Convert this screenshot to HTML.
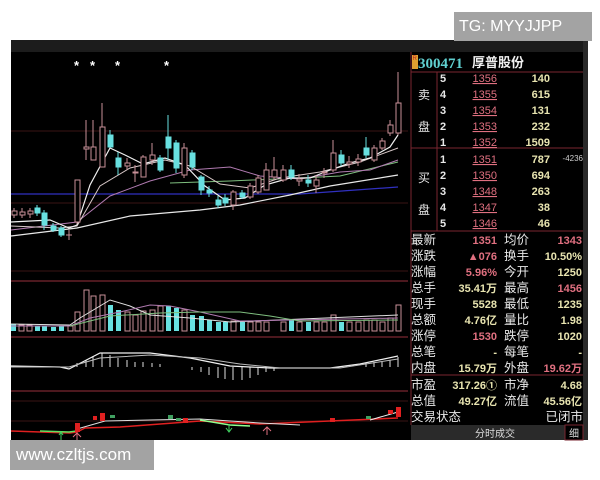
<!DOCTYPE html>
<html><head><meta charset="utf-8"><style>
html,body{margin:0;padding:0;background:#fff;width:600px;height:480px;overflow:hidden;font-family:"Liberation Sans","Noto Sans CJK SC",sans-serif}
svg{position:absolute;left:0;top:0}
.wm{position:absolute;background:#a3a3a3;color:#fff;font-family:"Liberation Sans",sans-serif}
</style></head><body>
<svg width="600" height="480" viewBox="0 0 600 480" font-family="Liberation Sans, Noto Sans CJK SC, sans-serif">
<rect x="11" y="40" width="577" height="400" fill="#000"/>
<rect x="11" y="40" width="577" height="12" fill="#1c1c1c"/>
<rect x="583" y="40" width="5" height="400" fill="#2a2a2a"/>
<g stroke="#3a1414" stroke-width="1">
<line x1="11" y1="131" x2="408" y2="131"/>
<line x1="11" y1="203" x2="408" y2="203"/>
<line x1="11" y1="271" x2="408" y2="271"/>
<line x1="11" y1="401" x2="408" y2="401"/>
<line x1="11" y1="421" x2="408" y2="421"/>
</g>
<g stroke="#7a2630" stroke-width="1.2">
<line x1="11" y1="281" x2="408" y2="281"/>
<line x1="11" y1="337" x2="408" y2="337"/>
<line x1="11" y1="391" x2="408" y2="391"/>
</g>
<g fill="#fff" font-size="13" font-weight="bold"><text x="74" y="70">*</text><text x="90" y="70">*</text><text x="115" y="70">*</text><text x="164" y="70">*</text></g>
<polyline points="11,194 300,194 398,187" fill="none" stroke="#3030c0" stroke-width="1.2"/>
<polyline points="11,236 77,228 130,216 200,210 240,205 290,195 330,186 398,175" fill="none" stroke="#e8e8e8" stroke-width="1.2"/>
<polyline points="170,183 230,181 300,178 340,176 398,162" fill="none" stroke="#7fbf7f" stroke-width="1"/>
<polyline points="11,230 77,222 110,196 150,181 190,170 230,167 260,176 300,179 340,172 370,170 398,160" fill="none" stroke="#b07ab0" stroke-width="1"/>
<polyline points="11,226 60,228 77,226 100,186 130,168 165,160 190,166 220,184 250,188 280,178 320,172 360,162 398,148" fill="none" stroke="#d8c8c8" stroke-width="1"/>
<polyline points="11,222 50,220 69,228 77,225 90,185 110,148 125,155 143,164 165,158 185,165 205,186 225,200 245,198 265,185 290,178 310,178 330,170 350,163 370,158 390,147 398,135" fill="none" stroke="#f0f0f0" stroke-width="1.2"/>
<g stroke="#c89098" stroke-width="1" fill="#000">
<line x1="14" y1="208" x2="14" y2="218"/><rect x="12" y="211" width="5" height="4"/>
<line x1="22" y1="208" x2="22" y2="218"/><rect x="20" y="212" width="5" height="3"/>
<line x1="30" y1="208" x2="30" y2="218"/><rect x="28" y="211" width="5" height="3"/>
<line x1="77" y1="180" x2="77" y2="224"/><rect x="75" y="180" width="5" height="42"/>
<line x1="86" y1="120" x2="86" y2="160"/><rect x="84" y="147" width="5" height="2"/>
<line x1="93" y1="120" x2="93" y2="160"/><rect x="91" y="147" width="5" height="13"/>
<line x1="102" y1="103" x2="102" y2="167"/><rect x="100" y="127" width="5" height="40"/>
<line x1="127" y1="158" x2="127" y2="170"/><rect x="125" y="163" width="5" height="3"/>
<line x1="135" y1="165" x2="135" y2="182"/><rect x="133" y="172" width="5" height="1"/>
<line x1="143" y1="155" x2="143" y2="177"/><rect x="141" y="157" width="5" height="20"/>
<line x1="152" y1="143" x2="152" y2="165"/><rect x="150" y="155" width="5" height="5"/>
<line x1="184" y1="143" x2="184" y2="178"/><rect x="182" y="148" width="5" height="27"/>
<line x1="233" y1="190" x2="233" y2="210"/><rect x="231" y="192" width="5" height="13"/>
<line x1="250" y1="183" x2="250" y2="199"/><rect x="248" y="186" width="5" height="11"/>
<line x1="258" y1="175" x2="258" y2="194"/><rect x="256" y="178" width="5" height="14"/>
<line x1="266" y1="163" x2="266" y2="190"/><rect x="264" y="170" width="5" height="20"/>
<line x1="274" y1="157" x2="274" y2="180"/><rect x="272" y="170" width="5" height="7"/>
<line x1="283" y1="165" x2="283" y2="182"/><rect x="281" y="170" width="5" height="10"/>
<line x1="299" y1="174" x2="299" y2="186"/><rect x="297" y="179" width="5" height="2"/>
<line x1="316" y1="175" x2="316" y2="193"/><rect x="314" y="180" width="5" height="6"/>
<line x1="324" y1="168" x2="324" y2="178"/><rect x="322" y="172" width="5" height="1"/>
<line x1="333" y1="140" x2="333" y2="172"/><rect x="331" y="153" width="5" height="17"/>
<line x1="349" y1="156" x2="349" y2="168"/><rect x="347" y="162" width="5" height="2"/>
<line x1="358" y1="154" x2="358" y2="166"/><rect x="356" y="159" width="5" height="3"/>
<line x1="374" y1="145" x2="374" y2="162"/><rect x="372" y="148" width="5" height="12"/>
<line x1="382" y1="138" x2="382" y2="150"/><rect x="380" y="141" width="5" height="7"/>
<line x1="390" y1="120" x2="390" y2="136"/><rect x="388" y="125" width="5" height="8"/>
<line x1="398" y1="72" x2="398" y2="135"/><rect x="396" y="103" width="5" height="30"/>
</g>
<g stroke="#68e0e0" stroke-width="1" fill="#68e0e0">
<line x1="37" y1="205" x2="37" y2="216"/><rect x="35" y="208" width="5" height="5"/>
<line x1="44" y1="210" x2="44" y2="230"/><rect x="42" y="213" width="5" height="12"/>
<line x1="53" y1="223" x2="53" y2="232"/><rect x="51" y="226" width="5" height="4"/>
<line x1="61" y1="226" x2="61" y2="237"/><rect x="59" y="228" width="5" height="7"/>
<line x1="69" y1="230" x2="69" y2="240" stroke="#c89098"/><line x1="66" y1="235" x2="72" y2="235" stroke="#c89098"/>
<line x1="110" y1="130" x2="110" y2="147"/><rect x="108" y="135" width="5" height="12"/>
<line x1="118" y1="152" x2="118" y2="175"/><rect x="116" y="158" width="5" height="9"/>
<line x1="160" y1="155" x2="160" y2="172"/><rect x="158" y="158" width="5" height="12"/>
<line x1="168" y1="115" x2="168" y2="160"/><rect x="166" y="137" width="5" height="11"/>
<line x1="176" y1="140" x2="176" y2="173"/><rect x="174" y="143" width="5" height="25"/>
<line x1="192" y1="150" x2="192" y2="170"/><rect x="190" y="153" width="5" height="14"/>
<line x1="201" y1="175" x2="201" y2="195"/><rect x="199" y="177" width="5" height="13"/>
<line x1="209" y1="186" x2="209" y2="197"/><rect x="207" y="190" width="5" height="3"/>
<line x1="218" y1="196" x2="218" y2="208"/><rect x="216" y="200" width="5" height="5"/>
<line x1="225" y1="194" x2="225" y2="206"/><rect x="223" y="198" width="5" height="5"/>
<line x1="242" y1="190" x2="242" y2="199"/><rect x="240" y="193" width="5" height="4"/>
<line x1="291" y1="165" x2="291" y2="180"/><rect x="289" y="170" width="5" height="7"/>
<line x1="308" y1="175" x2="308" y2="187"/><rect x="306" y="180" width="5" height="3"/>
<line x1="341" y1="150" x2="341" y2="166"/><rect x="339" y="155" width="5" height="8"/>
<line x1="366" y1="137" x2="366" y2="158"/><rect x="364" y="148" width="5" height="7"/>
</g>
<g stroke="#c89098" fill="#000" stroke-width="1">
<rect x="19" y="325" width="5" height="6"/><rect x="27" y="325" width="5" height="6"/><rect x="68" y="326" width="5" height="5"/>
<rect x="75" y="312" width="5" height="19"/><rect x="84" y="290" width="5" height="41"/><rect x="91" y="296" width="5" height="35"/><rect x="100" y="295" width="5" height="36"/>
<rect x="125" y="312" width="5" height="19"/><rect x="133" y="315" width="5" height="16"/><rect x="141" y="311" width="5" height="20"/><rect x="150" y="310" width="5" height="21"/>
<rect x="182" y="310" width="5" height="21"/><rect x="231" y="321" width="5" height="10"/><rect x="248" y="322" width="5" height="9"/><rect x="256" y="322" width="5" height="9"/>
<rect x="264" y="322" width="5" height="9"/><rect x="281" y="322" width="5" height="9"/><rect x="297" y="322" width="5" height="9"/><rect x="314" y="322" width="5" height="9"/><rect x="322" y="322" width="5" height="9"/>
<rect x="331" y="315" width="5" height="16"/><rect x="347" y="322" width="5" height="9"/><rect x="356" y="322" width="5" height="9"/><rect x="364" y="320" width="5" height="11"/><rect x="372" y="320" width="5" height="11"/><rect x="380" y="322" width="5" height="9"/><rect x="388" y="318" width="5" height="13"/><rect x="396" y="305" width="5" height="26"/>
<rect x="158" y="306" width="5" height="25"/>
</g>
<g fill="#68e0e0">
<rect x="11" y="324" width="5" height="7"/><rect x="35" y="326" width="5" height="5"/><rect x="42" y="326" width="5" height="5"/><rect x="51" y="327" width="5" height="4"/><rect x="59" y="326" width="5" height="5"/>
<rect x="108" y="305" width="5" height="26"/><rect x="116" y="310" width="5" height="21"/><rect x="166" y="306" width="5" height="25"/><rect x="174" y="308" width="5" height="23"/><rect x="190" y="315" width="5" height="16"/>
<rect x="199" y="316" width="5" height="15"/><rect x="207" y="320" width="5" height="11"/><rect x="216" y="322" width="5" height="9"/><rect x="223" y="322" width="5" height="9"/><rect x="240" y="322" width="5" height="9"/>
<rect x="289" y="319" width="5" height="12"/><rect x="306" y="322" width="5" height="9"/><rect x="339" y="322" width="5" height="9"/>
</g>
<polyline points="11,324 70,325 80,318 110,300 130,306 150,315 190,318 230,322 398,315" fill="none" stroke="#e0e0e0" stroke-width="1"/>
<polyline points="11,326 70,326 90,318 120,312 150,305 170,306 200,312 240,321 398,318" fill="none" stroke="#b07ab0" stroke-width="1"/>
<polyline points="70,326 110,316 160,313 200,312 240,312 270,316 300,321 398,320" fill="none" stroke="#7fbf7f" stroke-width="1"/>
<g stroke="#e0e0e0" stroke-width="1">
<line x1="77" y1="367" x2="77" y2="363"/><line x1="86" y1="367" x2="86" y2="360"/><line x1="93" y1="367" x2="93" y2="356"/><line x1="102" y1="367" x2="102" y2="353"/><line x1="110" y1="367" x2="110" y2="355"/><line x1="118" y1="367" x2="118" y2="358"/><line x1="127" y1="367" x2="127" y2="360"/><line x1="135" y1="367" x2="135" y2="362"/><line x1="143" y1="367" x2="143" y2="362"/><line x1="152" y1="367" x2="152" y2="363"/><line x1="160" y1="367" x2="160" y2="364"/>
<line x1="192" y1="367" x2="192" y2="370"/><line x1="201" y1="367" x2="201" y2="372"/><line x1="209" y1="367" x2="209" y2="375"/><line x1="218" y1="367" x2="218" y2="378"/><line x1="225" y1="367" x2="225" y2="379"/><line x1="233" y1="367" x2="233" y2="380"/><line x1="242" y1="367" x2="242" y2="380"/><line x1="250" y1="367" x2="250" y2="378"/><line x1="258" y1="367" x2="258" y2="375"/><line x1="266" y1="367" x2="266" y2="372"/><line x1="274" y1="367" x2="274" y2="371"/>
<line x1="366" y1="367" x2="366" y2="363"/><line x1="374" y1="367" x2="374" y2="362"/><line x1="382" y1="367" x2="382" y2="361"/><line x1="390" y1="367" x2="390" y2="360"/><line x1="398" y1="367" x2="398" y2="357"/>
</g>
<polyline points="11,366 60,367 69,369 100,353 150,353 190,358 230,366 270,368 330,368 360,364 398,356" fill="none" stroke="#f0f0f0" stroke-width="1.2"/>
<polyline points="11,367 69,367 100,358 150,355 200,358 240,364 280,368 340,368 398,359" fill="none" stroke="#bbb" stroke-width="1"/>
<polyline points="11,431 70,433 77,432 85,428 120,427 200,421 260,424 398,418" fill="none" stroke="#e02020" stroke-width="1.5"/>
<polyline points="77,429 105,421 150,420 200,419 260,423 300,425" fill="none" stroke="#e0e0e0" stroke-width="1"/>
<polyline points="40,431 69,432 77,431" fill="none" stroke="#60e060" stroke-width="1.5"/>
<polyline points="200,420 230,425 250,426" fill="none" stroke="#90ff90" stroke-width="1.5"/>
<polyline points="370,420 398,412" fill="none" stroke="#f0f0f0" stroke-width="1"/>
<g fill="#e02020"><rect x="75" y="423" width="5" height="9"/><rect x="100" y="413" width="5" height="8"/><rect x="93" y="416" width="4" height="4"/><rect x="183" y="418" width="5" height="5"/><rect x="396" y="407" width="5" height="10"/><rect x="330" y="418" width="5" height="4"/><rect x="388" y="410" width="5" height="4"/></g>
<g fill="#40a060"><rect x="110" y="415" width="5" height="3"/><rect x="168" y="415" width="5" height="4"/><rect x="176" y="418" width="5" height="3"/><rect x="366" y="416" width="5" height="3"/></g>
<g stroke="#40d060" fill="none"><path d="M59,435 L61,432 L63,435 M61,432 V440"/><path d="M226,428 L229,432 L232,428 M229,424 V432"/></g>
<g stroke="#e07080" fill="none"><path d="M73,437 L77,433 L81,437 M77,433 V440"/><path d="M263,431 L267,427 L271,431 M267,427 V435"/></g>
<g stroke="#7a2630" stroke-width="1" fill="none">
<line x1="411" y1="52" x2="411" y2="425"/>
<line x1="411" y1="72" x2="583" y2="72"/>
<line x1="411" y1="148" x2="583" y2="148"/>
<line x1="411" y1="231" x2="583" y2="231"/>
<line x1="411" y1="375" x2="583" y2="375"/>
<line x1="437" y1="72" x2="437" y2="231"/>
</g>
<rect x="411" y="425" width="172" height="15" fill="#2a2a2a"/>
<rect x="565" y="425" width="18" height="15" fill="#000" stroke="#7a2630"/>
<rect x="412" y="55" width="6" height="14" fill="#e0a030"/>
<text x="412.5" y="60" font-size="6" fill="#c02020">R</text>
<text x="418" y="68" font-size="15" font-weight="bold" fill="#60d0d0" font-family="Liberation Serif, serif">300471</text>
<text x="472" y="67" font-size="13" fill="#f0f0f0" font-weight="bold">厚普股份</text>
<g font-size="12" fill="#e8e8e8">
<text x="418" y="99">卖</text><text x="418" y="131">盘</text>
<text x="418" y="182">买</text><text x="418" y="214">盘</text>
</g>
<g font-size="11" fill="#e8e8e8" font-weight="bold">
<text x="440" y="82">5</text><text x="440" y="98">4</text><text x="440" y="114">3</text><text x="440" y="130">2</text><text x="440" y="146">1</text>
<text x="440" y="163">1</text><text x="440" y="179">2</text><text x="440" y="195">3</text><text x="440" y="211">4</text><text x="440" y="227">5</text>
</g>
<g font-size="11" fill="#e07080" text-anchor="end" text-decoration="underline">
<text x="497" y="82">1356</text><text x="497" y="98">1355</text><text x="497" y="114">1354</text><text x="497" y="130">1353</text><text x="497" y="146">1352</text>
<text x="497" y="163">1351</text><text x="497" y="179">1350</text><text x="497" y="195">1348</text><text x="497" y="211">1347</text><text x="497" y="227">1346</text>
</g>
<g font-size="11" fill="#e8e4b0" text-anchor="end" font-weight="bold">
<text x="550" y="82">140</text><text x="550" y="98">615</text><text x="550" y="114">131</text><text x="550" y="130">232</text><text x="550" y="146">1509</text>
<text x="550" y="163">787</text><text x="550" y="179">694</text><text x="550" y="195">263</text><text x="550" y="211">38</text><text x="550" y="227">46</text>
</g>
<text x="583" y="161" font-size="8" fill="#ccc" text-anchor="end">-4236</text>
<g font-size="12.5" fill="#e8e8e8">
<text x="411" y="244">最新</text><text x="411" y="260">涨跌</text><text x="411" y="276">涨幅</text><text x="411" y="292">总手</text><text x="411" y="308">现手</text><text x="411" y="324">总额</text><text x="411" y="340">涨停</text><text x="411" y="356">总笔</text><text x="411" y="372">内盘</text><text x="411" y="389">市盈</text><text x="411" y="405">总值</text><text x="411" y="421">交易状态</text>
<text x="504" y="244">均价</text><text x="504" y="260">换手</text><text x="504" y="276">今开</text><text x="504" y="292">最高</text><text x="504" y="308">最低</text><text x="504" y="324">量比</text><text x="504" y="340">跌停</text><text x="504" y="356">每笔</text><text x="504" y="372">外盘</text><text x="504" y="389">市净</text><text x="504" y="405">流值</text>
<text x="583" y="421" text-anchor="end">已闭市</text>
</g>
<g font-size="11" text-anchor="end" font-weight="bold">
<text x="497" y="244" fill="#e07080">1351</text><text x="497" y="260" fill="#e07080">▲076</text><text x="497" y="276" fill="#e07080">5.96%</text><text x="497" y="292" fill="#e8e4b0">35.41万</text><text x="497" y="308" fill="#e8e4b0">5528</text><text x="497" y="324" fill="#e8e4b0">4.76亿</text><text x="497" y="340" fill="#e07080">1530</text><text x="497" y="356" fill="#e8e4b0">-</text><text x="497" y="372" fill="#e8e4b0">15.79万</text><text x="497" y="389" fill="#e8e4b0">317.26①</text><text x="497" y="405" fill="#e8e4b0">49.27亿</text>
<text x="582" y="244" fill="#e07080">1343</text><text x="582" y="260" fill="#e8e4b0">10.50%</text><text x="582" y="276" fill="#e8e4b0">1250</text><text x="582" y="292" fill="#e07080">1456</text><text x="582" y="308" fill="#e8e4b0">1235</text><text x="582" y="324" fill="#e8e4b0">1.98</text><text x="582" y="340" fill="#e8e4b0">1020</text><text x="582" y="356" fill="#e8e4b0">-</text><text x="582" y="372" fill="#e07080">19.62万</text><text x="582" y="389" fill="#e8e4b0">4.68</text><text x="582" y="405" fill="#e8e4b0">45.56亿</text>
</g>
<text x="495" y="437" font-size="10" fill="#ddd" text-anchor="middle">分时成交</text>
<text x="574" y="437" font-size="10" fill="#ddd" text-anchor="middle">细</text>
</svg>
<div class="wm" style="left:454px;top:12px;width:138px;height:29px;font-size:16px;line-height:29px;text-indent:5px">TG: MYYJJPP</div>
<div class="wm" style="left:10px;top:440px;width:144px;height:30px;font-size:17px;line-height:30px;text-indent:6px">www.czltjs.com</div>
</body></html>
